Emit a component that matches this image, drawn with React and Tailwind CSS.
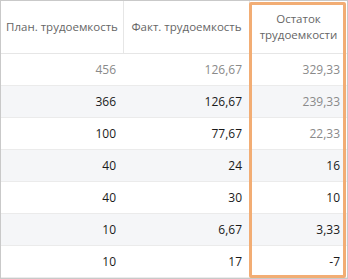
const rows = [
  { plan: '456', fact: '126,67', rest: '329,33', dimPlan: true, dimFact: true, dimRest: true },
  { plan: '366', fact: '126,67', rest: '239,33', dimRest: true },
  { plan: '100', fact: '77,67', rest: '22,33', dimRest: true },
  { plan: '40', fact: '24', rest: '16' },
  { plan: '40', fact: '30', rest: '10' },
  { plan: '10', fact: '6,67', rest: '3,33' },
  { plan: '10', fact: '17', rest: '-7' },
];

export default function App() {
  return (
    <div className="relative w-[348px] h-[279px] bg-white border border-[#c9c9c9] overflow-hidden text-[12px] font-['Open_Sans',sans-serif]">
      <div className="grid grid-cols-[123px_126px_1fr] h-[53px] border-b border-[#e6e6e6] text-[#666] text-[11.5px]">
        <div className="flex items-center justify-center border-r border-[#e6e6e6]">План. трудоемкость</div>
        <div className="flex items-center justify-center border-r border-[#e6e6e6]">Факт. трудоемкость</div>
        <div className="flex flex-col items-center justify-center text-center leading-[16px]">
          <span>Остаток</span>
          <span>трудоемкости</span>
        </div>
      </div>
      {rows.map((r, i) => (
        <div
          key={i}
          className={`grid grid-cols-[123px_126px_1fr] h-[32px] items-center border-b border-[#ebebeb] last:border-b-0 ${i % 2 === 1 ? 'bg-[#f5f6f8]' : 'bg-white'}`}
        >
          <div className={`text-right pr-[8px] ${r.dimPlan ? 'text-[#8a8a8a]' : 'text-[#1a1a1a]'}`}>{r.plan}</div>
          <div className={`text-right pr-[8px] ${r.dimFact ? 'text-[#8a8a8a]' : 'text-[#1a1a1a]'}`}>{r.fact}</div>
          <div className={`text-right pr-[7px] ${r.dimRest ? 'text-[#8a8a8a]' : 'text-[#1a1a1a]'}`}>{r.rest}</div>
        </div>
      ))}
      {/* highlight frame round the last column */}
      <div className="absolute left-[248px] top-[1px] w-[97px] h-[276px] border-[3px] border-[#f2ad74] rounded-[2px] pointer-events-none" />
    </div>
  );
}
